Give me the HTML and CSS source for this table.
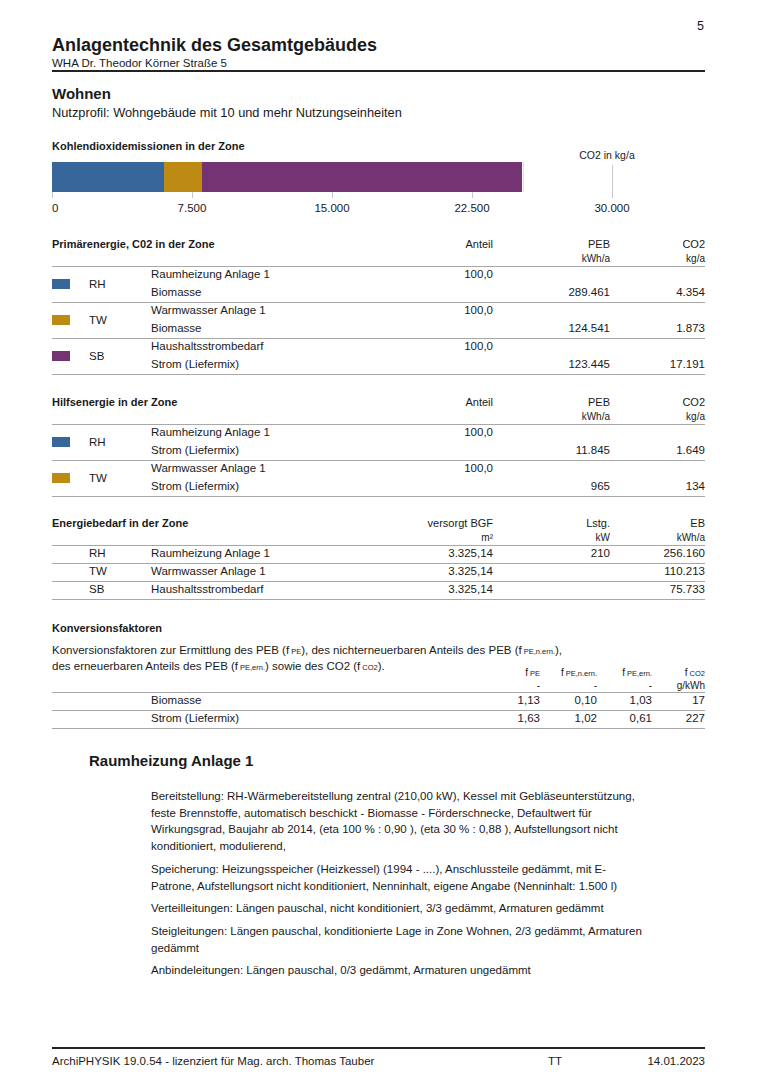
FILE: index.html
```html
<!DOCTYPE html>
<html lang="de">
<head>
<meta charset="utf-8">
<title>Anlagentechnik des Gesamtgebäudes</title>
<link rel="stylesheet" href="styles.css">
</head>
<body>
<div class="page">
  <div class="pagenum">5</div>
  <header class="doc-head">
    <h1>Anlagentechnik des Gesamtgebäudes</h1>
    <div class="subtitle">WHA Dr. Theodor Körner Straße 5</div>
  </header>

  <h2 class="zone">Wohnen</h2>
  <div class="profile">Nutzprofil: Wohngebäude mit 10 und mehr Nutzungseinheiten</div>

  <section class="chart">
    <div class="sec-title">Kohlendioxidemissionen in der Zone</div>
    <div class="unit-label">CO2 in kg/a</div>
    <div class="grid-line" style="left:0px"></div>
    <div class="grid-line" style="left:140px"></div>
    <div class="grid-line" style="left:280px"></div>
    <div class="grid-line" style="left:420px"></div>
    <div class="grid-line top-free" style="left:560px"></div>
    <div class="bar">
      <div class="seg rh" style="width:112.1px"></div>
      <div class="seg tw" style="width:37.5px"></div>
      <div class="seg sb" style="width:320.9px"></div>
    </div>
    <div class="tick first" style="left:0px">0</div>
    <div class="tick" style="left:140px">7.500</div>
    <div class="tick" style="left:280px">15.000</div>
    <div class="tick" style="left:420px">22.500</div>
    <div class="tick" style="left:560px">30.000</div>
  </section>

  <section class="tbl tbl-pe">
    <div class="thead">
      <div class="th-title">Primärenergie, C02 in der Zone</div>
      <div class="num c4">Anteil</div>
      <div class="num c5">PEB<span class="unit">kWh/a</span></div>
      <div class="num c6">CO2<span class="unit">kg/a</span></div>
    </div>
    <div class="trow two">
      <div class="sw rh"></div><div class="code">RH</div>
      <div class="desc">Raumheizung Anlage 1<br>Biomasse</div>
      <div class="num">100,0</div>
      <div class="num bot">289.461</div>
      <div class="num bot">4.354</div>
    </div>
    <div class="trow two">
      <div class="sw tw"></div><div class="code">TW</div>
      <div class="desc">Warmwasser Anlage 1<br>Biomasse</div>
      <div class="num">100,0</div>
      <div class="num bot">124.541</div>
      <div class="num bot">1.873</div>
    </div>
    <div class="trow two">
      <div class="sw sb"></div><div class="code">SB</div>
      <div class="desc">Haushaltsstrombedarf<br>Strom (Liefermix)</div>
      <div class="num">100,0</div>
      <div class="num bot">123.445</div>
      <div class="num bot">17.191</div>
    </div>
  </section>

  <section class="tbl tbl-aux">
    <div class="thead">
      <div class="th-title">Hilfsenergie in der Zone</div>
      <div class="num c4">Anteil</div>
      <div class="num c5">PEB<span class="unit">kWh/a</span></div>
      <div class="num c6">CO2<span class="unit">kg/a</span></div>
    </div>
    <div class="trow two">
      <div class="sw rh"></div><div class="code">RH</div>
      <div class="desc">Raumheizung Anlage 1<br>Strom (Liefermix)</div>
      <div class="num">100,0</div>
      <div class="num bot">11.845</div>
      <div class="num bot">1.649</div>
    </div>
    <div class="trow two">
      <div class="sw tw"></div><div class="code">TW</div>
      <div class="desc">Warmwasser Anlage 1<br>Strom (Liefermix)</div>
      <div class="num">100,0</div>
      <div class="num bot">965</div>
      <div class="num bot">134</div>
    </div>
  </section>

  <section class="tbl tbl-eb">
    <div class="thead">
      <div class="th-title">Energiebedarf in der Zone</div>
      <div class="num c4">versorgt BGF<span class="unit">m²</span></div>
      <div class="num c5">Lstg.<span class="unit">kW</span></div>
      <div class="num c6">EB<span class="unit">kWh/a</span></div>
    </div>
    <div class="trow one">
      <div></div><div class="code">RH</div><div class="desc">Raumheizung Anlage 1</div>
      <div class="num">3.325,14</div><div class="num">210</div><div class="num">256.160</div>
    </div>
    <div class="trow one">
      <div></div><div class="code">TW</div><div class="desc">Warmwasser Anlage 1</div>
      <div class="num">3.325,14</div><div class="num"></div><div class="num">110.213</div>
    </div>
    <div class="trow one">
      <div></div><div class="code">SB</div><div class="desc">Haushaltsstrombedarf</div>
      <div class="num">3.325,14</div><div class="num"></div><div class="num">75.733</div>
    </div>
  </section>

  <section class="conv">
    <div class="sec-title">Konversionsfaktoren</div>
    <p class="conv-text">Konversionsfaktoren zur Ermittlung des PEB (f<span class="sub">PE</span>), des nichterneuerbaren Anteils des PEB (f<span class="sub">PE,n.ern.</span>),<br>des erneuerbaren Anteils des PEB (f<span class="sub">PE,ern.</span>) sowie des CO2 (f<span class="sub">CO2</span>).</p>
    <div class="conv-head">
      <div class="num k3">f<span class="sub">PE</span><span class="unit">-</span></div>
      <div class="num k4">f<span class="sub">PE,n.ern.</span><span class="unit">-</span></div>
      <div class="num k5">f<span class="sub">PE,ern.</span><span class="unit">-</span></div>
      <div class="num k6">f<span class="sub">CO2</span><span class="unit">g/kWh</span></div>
    </div>
    <div class="conv-row">
      <div></div><div class="desc">Biomasse</div>
      <div class="num">1,13</div><div class="num">0,10</div><div class="num">1,03</div><div class="num">17</div>
    </div>
    <div class="conv-row">
      <div></div><div class="desc">Strom (Liefermix)</div>
      <div class="num">1,63</div><div class="num">1,02</div><div class="num">0,61</div><div class="num">227</div>
    </div>
  </section>

  <section class="system">
    <h3>Raumheizung Anlage 1</h3>
    <div class="sys-text">
      <p>Bereitstellung: RH-Wärmebereitstellung zentral (210,00 kW), Kessel mit Gebläseunterstützung, feste Brennstoffe, automatisch beschickt - Biomasse - Förderschnecke, Defaultwert für Wirkungsgrad, Baujahr ab 2014, (eta 100 % : 0,90 ), (eta 30 % : 0,88 ), Aufstellungsort nicht konditioniert, modulierend,</p>
      <p>Speicherung: Heizungsspeicher (Heizkessel) (1994 - ....), Anschlussteile gedämmt, mit E-Patrone, Aufstellungsort nicht konditioniert, Nenninhalt, eigene Angabe (Nenninhalt: 1.500 l)</p>
      <p>Verteilleitungen: Längen pauschal, nicht konditioniert, 3/3 gedämmt, Armaturen gedämmt</p>
      <p>Steigleitungen: Längen pauschal, konditionierte Lage in Zone Wohnen, 2/3 gedämmt, Armaturen gedämmt</p>
      <p>Anbindeleitungen: Längen pauschal, 0/3 gedämmt, Armaturen ungedämmt</p>
    </div>
  </section>

  <footer class="doc-foot">
    <span class="foot-left">ArchiPHYSIK 19.0.54 - lizenziert für Mag. arch. Thomas Tauber</span>
    <span class="foot-mid">TT</span>
    <span class="foot-right">14.01.2023</span>
  </footer>
</div>
</body>
</html>
```
FILE: styles.css
```css
* { box-sizing: border-box; }
html, body { margin: 0; padding: 0; background: #fff; }
body {
  font-family: "Liberation Sans", Arial, sans-serif;
  color: #1a1a1a;
  font-size: 11.5px;
}
.page {
  width: 764px;
  height: 1080px;
  padding: 18px 59px 0 52px;
  display: flex;
  flex-direction: column;
}
.pagenum {
  text-align: right;
  font-size: 12.5px;
  line-height: 16px;
  padding-right: 1px;
}
.doc-head {
  border-bottom: 2px solid #222;
}
.doc-head h1 {
  margin: 0;
  font-size: 18px;
  line-height: 22px;
  font-weight: bold;
}
.subtitle {
  font-size: 11.5px;
  line-height: 14px;
}
.zone {
  margin: 13px 0 0;
  font-size: 15px;
  line-height: 18px;
  font-weight: bold;
}
.profile {
  margin-top: 2px;
  font-size: 12.8px;
  line-height: 16px;
}
.sec-title {
  font-weight: bold;
  font-size: 11px;
  line-height: 16px;
}

/* chart */
.chart {
  position: relative;
  margin-top: 17px;
  height: 80px;
}
.unit-label {
  position: absolute;
  left: 555px;
  top: 9px;
  transform: translateX(-50%);
  font-size: 10.5px;
  line-height: 16px;
  white-space: nowrap;
}
.grid-line {
  position: absolute;
  top: 24px;
  height: 36px;
  width: 1px;
  background: #c8c8c8;
}
.grid-line.top-free { top: 27px; height: 33px; }
.bar {
  position: absolute;
  left: 0;
  top: 24px;
  height: 30px;
  display: flex;
  border-right: 1px solid #e0e0e0;
  padding-right: 1px;
  background: #fff;
}
.seg { height: 100%; }
.rh { background: #37679a; }
.tw { background: #bd8a13; }
.sb { background: #743474; }
.tick {
  position: absolute;
  top: 63px;
  transform: translateX(-50%);
  font-size: 11.5px;
  line-height: 14px;
  white-space: nowrap;
}
.tick.first { transform: none; }

/* tables */
.tbl-pe { margin-top: 18px; }
.tbl-aux { margin-top: 19px; }
.tbl-eb { margin-top: 18px; }
.thead, .trow {
  display: grid;
  grid-template-columns: 18px 81px 1fr 93px 117px 95px;
}
.thead {
  font-size: 11px;
  line-height: 14.5px;
  padding-top: 1px;
  border-bottom: 1px solid #a8a8a8;
}
.th-title {
  grid-column: 1 / 4;
  font-weight: bold;
}
.c4 { grid-column: 4; }
.c5 { grid-column: 5; }
.c6 { grid-column: 6; }
.num { text-align: right; }
.unit {
  display: block;
  font-size: 10px;
}
.trow {
  font-size: 11.5px;
  border-bottom: 1px solid #a8a8a8;
}
.trow.two {
  height: 36px;
  line-height: 18px;
  align-items: start;
}
.trow.two > * { margin-top: -2px; }
.trow.two .bot { padding-top: 18px; }
.trow.two .sw, .trow.two .code { align-self: center; }
.trow.one { height: 18px; line-height: 15px; }
.sw {
  width: 18px;
  height: 10px;
}
.code { padding-left: 19px; }

/* conversion */
.conv { margin-top: 20px; }
.conv-text {
  margin: 7px 0 0;
  font-size: 11.5px;
  line-height: 15px;
}
.sub { font-size: 7.5px; padding-left: 2px; }
.conv-head, .conv-row {
  display: grid;
  grid-template-columns: 99px 1fr 60px 57px 55px 53px;
}
.conv-head {
  margin-top: -8px;
  font-size: 10px;
  line-height: 12px;
  border-bottom: 1px solid #a8a8a8;
}
.k3 { grid-column: 3; }
.k4 { grid-column: 4; }
.k5 { grid-column: 5; }
.k6 { grid-column: 6; }
.conv-row {
  font-size: 11.5px;
  height: 18px;
  line-height: 15px;
  border-bottom: 1px solid #a8a8a8;
}

/* system */
.system h3 {
  margin: 23px 0 0 37px;
  font-size: 15px;
  line-height: 18px;
  font-weight: bold;
}
.sys-text {
  margin: 18px 0 0 99px;
  width: 497px;
  font-size: 11.5px;
  line-height: 16.7px;
}
.sys-text p { margin: 0 0 6px; }

.doc-foot {
  margin-top: auto;
  margin-bottom: 12px;
  border-top: 2px solid #222;
  padding-top: 5px;
  display: grid;
  grid-template-columns: 496px 20px 1fr;
  font-size: 11.5px;
  line-height: 14px;
}
.foot-right { text-align: right; }
```
